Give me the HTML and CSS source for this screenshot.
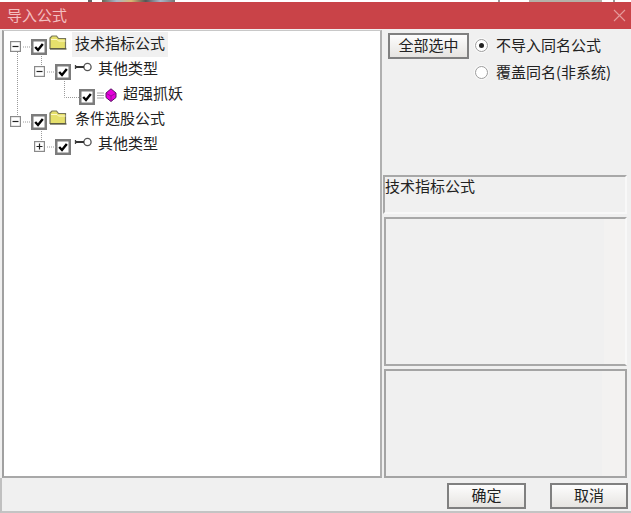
FILE: index.html
```html
<!DOCTYPE html>
<html lang="zh">
<head>
<meta charset="utf-8">
<title>导入公式</title>
<link rel="stylesheet" href="styles.css">
</head>
<body>
<svg class="defs" width="0" height="0">
  <defs>
    <symbol id="check" viewBox="0 0 16 16">
      <rect x="1.250" y="1.250" width="13.500" height="13.500" fill="#fff" stroke="#7c7c7c" stroke-width="2.500"/>
      <path d="M4.200 8l2.800 3 4.800-6" fill="none" stroke="#000" stroke-width="2.400"/>
    </symbol>
    <symbol id="minus" viewBox="0 0 11 11">
      <rect x=".6" y=".6" width="9.800" height="9.800" fill="#fff" stroke="#8a8a8a" stroke-width="1.200"/>
      <path d="M2.500 5.500h6" stroke="#222" stroke-width="1.200"/>
    </symbol>
    <symbol id="plus" viewBox="0 0 11 11">
      <rect x=".6" y=".6" width="9.800" height="9.800" fill="#fff" stroke="#8a8a8a" stroke-width="1.200"/>
      <path d="M2.500 5.500h6M5.500 2.500v6" stroke="#222" stroke-width="1.200"/>
    </symbol>
    <symbol id="folder" viewBox="0 0 18 15">
      <path d="M1 13.500V3l2-2h4.500l2 2.500h7v10z" fill="#e6e06c" stroke="#77765a" stroke-width="1.200"/>
      <path d="M2 4.500h6l1.500 1.500h7" fill="none" stroke="#fff9c8"/>
      <path d="M1 14h16.500" stroke="#4e4e36" stroke-width="1.200"/>
    </symbol>
    <symbol id="key" viewBox="0 0 18 10">
      <circle cx="13.500" cy="5" r="3.600" fill="#fff" stroke="#555" stroke-width="1.300"/>
      <path d="M10 5H1" fill="none" stroke="#333" stroke-width="2"/>
      <path d="M1.500 3v4" fill="none" stroke="#444" stroke-width="1.300"/>
    </symbol>
    <symbol id="gem" viewBox="0 0 20 14">
      <path d="M0 5h7M0 7.500h7M0 10h7" stroke="#a8a8a8"/>
      <path d="M14 .8l5 4.200v4.500l-5 4-5-4V5z" fill="#e600dc" stroke="#5a1464"/>
      <path d="M9.500 5.500l4.500 2.500 4.500-2.500M14 8v5" fill="none" stroke="#86108a" stroke-width=".8"/>
    </symbol>
  </defs>
</svg>
<div class="window">
  <div class="behind"><span class="frag frag-a"></span><span class="frag frag-b"></span><span class="frag frag-c"></span><span class="frag frag-d"></span><span class="frag frag-e"></span></div>
  <header class="titlebar">
    <span class="title">导入公式</span>
    <svg class="close" width="13" height="13" viewBox="0 0 13 13"><path d="M1 1l11 11M12 1L1 12" stroke="#e59a9c" stroke-width="1.100"/></svg>
  </header>
  <main class="main">
    <section class="tree">
      <svg class="connectors" width="120" height="140" viewBox="0 0 120 140">
        <path d="M15.500 21V84M39.500 25V35M39.500 100V109M62.500 50V66.500H79M21 16H31M45 41H55M21 91H31M45 116H55" fill="none" stroke="#9a9a9a" stroke-dasharray="1 1"/>
      </svg>
      <div class="row">
        <svg class="exp"><use href="#minus"/></svg>
        <svg class="chk"><use href="#check"/></svg>
        <svg class="folder"><use href="#folder"/></svg>
        <span class="label selected">技术指标公式</span>
      </div>
      <div class="row lvl2">
        <svg class="exp"><use href="#minus"/></svg>
        <svg class="chk"><use href="#check"/></svg>
        <svg class="key"><use href="#key"/></svg>
        <span class="label">其他类型</span>
      </div>
      <div class="row lvl3">
        <svg class="chk"><use href="#check"/></svg>
        <svg class="gem"><use href="#gem"/></svg>
        <span class="label">超强抓妖</span>
      </div>
      <div class="row">
        <svg class="exp"><use href="#minus"/></svg>
        <svg class="chk"><use href="#check"/></svg>
        <svg class="folder"><use href="#folder"/></svg>
        <span class="label">条件选股公式</span>
      </div>
      <div class="row lvl2">
        <svg class="exp"><use href="#plus"/></svg>
        <svg class="chk"><use href="#check"/></svg>
        <svg class="key"><use href="#key"/></svg>
        <span class="label">其他类型</span>
      </div>
    </section>
    <aside class="side">
      <div class="controls">
        <button class="btn btn-all" type="button"><span class="cap">全部选中</span></button>
        <div class="radios">
          <div class="radio"><span class="dot on"></span><span class="cap">不导入同名公式</span></div>
          <div class="radio"><span class="dot"></span><span class="cap">覆盖同名(非系统)</span></div>
        </div>
      </div>
      <div class="panel panel-info"><span class="cap">技术指标公式</span></div>
      <div class="panel panel-mid"><div class="band band-mid"></div></div>
      <div class="panel panel-low"><div class="band band-low"></div></div>
    </aside>
  </main>
  <footer class="footer">
    <button class="btn btn-ok" type="button"><span class="cap">确定</span></button>
    <button class="btn btn-cancel" type="button"><span class="cap">取消</span></button>
  </footer>
</div>
</body>
</html>
```
FILE: styles.css
```css
* { box-sizing: border-box; }
html, body { margin: 0; padding: 0; background: #f0f0f0; }
body { font-family: "Noto Sans CJK SC", "Liberation Sans", sans-serif; font-size: 14px; color: #222; overflow: hidden; }
.defs { display: block; height: 0; }
.window { width: 631px; height: 513px; display: flex; flex-direction: column; }

.behind { height: 2px; background: #fff; overflow: hidden; display: flex; flex: none; padding-left: 88px; }
.frag { display: block; height: 2px; flex: none; }
.frag-a { width: 4px; background: #666; }
.frag-b { width: 73px; margin-left: 10px; background: linear-gradient(90deg, #665, #a9b6c8, #d9b673, #555, #a9b6c8, #777); }
.frag-c { width: 2px; margin-left: 323px; background: #999; }
.frag-d { width: 73px; margin-left: 29px; background: #b4b0a8; }
.frag-e { width: 2px; margin-left: 11px; background: #999; }

.titlebar { height: 27px; flex: none; background: #c94348; display: flex; align-items: center; justify-content: space-between; padding: 0 5px 0 7px; }
.title { font-size: 15px; line-height: 21px; color: #f3bfc0; margin-top: -2px; }
.close { display: block; }

.main { height: 449px; flex: none; display: flex; padding: 1px 0 0 2px; }
.tree { position: relative; width: 380px; background: #fff; border-left: 2px solid #a0a0a0; border-top: 1px solid #c8c8c8; border-right: 2px solid #b0b0b0; border-bottom: 2px solid #a8a8a8; padding: 1px 0 0 6px; }
.connectors { position: absolute; left: -2px; top: 0; }

.row { height: 25px; display: flex; align-items: flex-start; }
.lvl2 { padding-left: 24px; }
.lvl3 { padding-left: 69px; }
.exp { width: 11px; height: 11px; margin: 9px 10px 0 0; flex: none; }
.chk { width: 16px; height: 16px; margin-top: 7px; flex: none; }
.folder { width: 18px; height: 15px; margin: 3px 0 0 2px; flex: none; }
.key { width: 18px; height: 10px; margin: 5px 0 0 3px; flex: none; }
.gem { width: 20px; height: 14px; margin: 6px 0 0 2px; flex: none; }
.label { font-size: 15px; line-height: 21px; height: 25px; color: #222; white-space: nowrap; }
.folder + .label { margin-left: 5px; padding: 0 3px; width: 96px; }
.selected { background: #f0f0f0; }
.key + .label { margin-left: 6px; }
.gem + .label { margin-left: 6px; }

.side { width: 247px; flex: none; display: flex; flex-direction: column; padding: 0 2px 0 2px; }
.controls { height: 145px; flex: none; display: flex; align-items: flex-start; padding: 3px 0 0 4px; }
.btn { font: 15px/20px "Noto Sans CJK SC", "Liberation Sans", sans-serif; color: #222; padding: 0 0 2px; border: 2px solid #808080; background: linear-gradient(#fdfdfd, #e6e4e1); display: flex; align-items: center; justify-content: center; }
.btn-all { width: 81px; height: 26px; }
.radios { margin-left: 6px; display: flex; flex-direction: column; gap: 7px; padding-top: 2px; }
.radio { display: flex; align-items: center; gap: 8px; height: 20px; font-size: 15px; line-height: 20px; white-space: nowrap; }
.cap { display: block; }
.dot { width: 13px; height: 13px; border-radius: 50%; background: #fff; border: 1px solid #9c9c9c; box-shadow: 0 0 0 1px #fafafa; display: flex; align-items: center; justify-content: center; }
.dot.on::after { content: ""; width: 5px; height: 5px; border-radius: 50%; background: #222; }

.panel { position: relative; background: #f0f0f0; border: 2px solid #a8a8a8; border-right-color: #f8f8f8; border-bottom-color: #f8f8f8; }
.panel-info { height: 39px; font-size: 15px; line-height: 18px; margin-bottom: 3px; margin-left: -1px; }
.panel-mid { height: 150px; margin-bottom: 3px; border-bottom-color: #a8a8a8; }
.panel-low { height: 109px; border-color: #a4a4a4; }
.band { position: absolute; top: 0; bottom: 0; right: 0; background: #f3f2f1; }
.band-mid { width: 21px; }
.band-low { width: 23px; }

.footer { flex: 1; display: flex; justify-content: flex-end; gap: 24px; padding: 5px 3px 0 0; border-bottom: 2px solid #c4c4c4; border-left: 2px solid #c0c0c0; }
.btn-ok { width: 79px; height: 26px; }
.btn-cancel { width: 78px; height: 26px; }
```
